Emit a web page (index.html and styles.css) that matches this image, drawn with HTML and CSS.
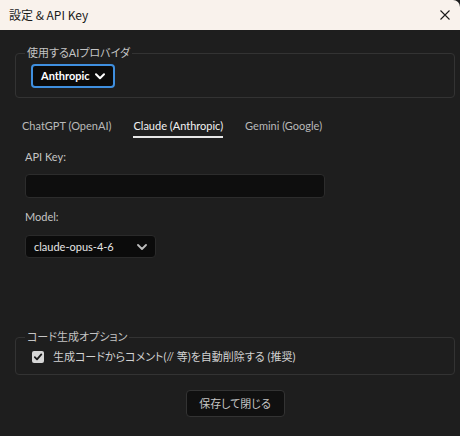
FILE: index.html
```html
<!DOCTYPE html>
<html lang="ja">
<head>
<meta charset="utf-8">
<title>設定 &amp; API Key</title>
<link rel="stylesheet" href="styles.css">
</head>
<body>
<div class="window">
  <div class="titlebar">
    <span class="title">設定 &amp; API Key</span>
    <svg class="close" width="10" height="10" viewBox="0 0 10 10"><path d="M0.5 0.5 L9.5 9.5 M9.5 0.5 L0.5 9.5" stroke="#1a1a1a" stroke-width="1.1" fill="none"/></svg>
  </div>
  <div class="content">
    <fieldset class="group provider">
      <legend>使用するAIプロバイダ</legend>
      <div class="select select-focus">
        <span class="select-text bold">Anthropic</span>
        <svg width="10" height="7" viewBox="0 0 10 7"><path d="M1 1.2 L5 5.2 L9 1.2" stroke="#ffffff" stroke-width="2" fill="none" stroke-linecap="round" stroke-linejoin="round"/></svg>
      </div>
    </fieldset>

    <div class="tabs">
      <span class="tab">ChatGPT (OpenAI)</span>
      <span class="tab active">Claude (Anthropic)</span>
      <span class="tab">Gemini (Google)</span>
    </div>

    <div class="panel">
      <div class="label">API Key:</div>
      <div class="input"></div>
      <div class="label label-model">Model:</div>
      <div class="select select-model">
        <span class="select-text">claude-opus-4-6</span>
        <svg width="10" height="6" viewBox="0 0 10 6"><path d="M1 1 L5 5 L9 1" stroke="#bdbdbd" stroke-width="1.8" fill="none" stroke-linecap="round" stroke-linejoin="round"/></svg>
      </div>
    </div>

    <fieldset class="group options">
      <legend>コード生成オプション</legend>
      <label class="check-row">
        <span class="checkbox"><svg width="10" height="10" viewBox="0 0 10 10"><path d="M1.8 5.2 L4 7.4 L8.3 2.4" stroke="#1a1a1a" stroke-width="1.8" fill="none" stroke-linecap="round" stroke-linejoin="round"/></svg></span>
        <span class="check-text">生成コードからコメント(// 等)を自動削除する (推奨)</span>
      </label>
    </fieldset>

    <div class="actions">
      <button class="btn">保存して閉じる</button>
    </div>
  </div>
</div>
</body>
</html>
```

FILE: styles.css
```css
* { box-sizing: border-box; }
html, body {
  margin: 0;
  padding: 0;
  background: #1e1e1e;
}
body {
  width: 460px;
  height: 436px;
  overflow: hidden;
  font-family: Lato, "Noto Sans CJK JP", sans-serif;
  font-feature-settings: "palt" 1;
  font-size: 11px;
  color: #c8c8c8;
}
.window {
  width: 460px;
  height: 436px;
  background: #1e1e1e;
  display: flex;
  flex-direction: column;
}
.titlebar {
  height: 30px;
  flex: 0 0 30px;
  background: #f9f2ec;
  border-top-right-radius: 7px;
  display: flex;
  align-items: center;
  justify-content: space-between;
  padding: 0 10px 1px 9px;
}
.title {
  color: #1a1a1a;
  font-family: "Noto Sans CJK JP", sans-serif;
  font-feature-settings: normal;
  font-size: 12px;
  line-height: 16px;
}
.close { display: block; }

.content {
  padding: 0 5px 0 15px;
  display: flex;
  flex-direction: column;
}

.group {
  margin: 0;
  border: 1px solid #333333;
  border-radius: 4px;
  padding: 4px 10px 9px 15px;
  min-width: 0;
}
.group legend {
  margin-left: -6px;
  padding: 0 2px;
  font-size: 11px;
  line-height: 14px;
  color: #c4c4c4;
}
.provider { margin-top: 16px; }

.select {
  display: flex;
  align-items: center;
  justify-content: space-between;
  background: #0b0b0b;
  border-radius: 4px;
}
.select-focus {
  width: 84px;
  height: 24px;
  border: 2px solid #3f8fdf;
  padding: 0 8px 0 8px;
}
.select-text {
  font-size: 11px;
  line-height: 16px;
  color: #e6e6e6;
}
.bold { font-weight: 700; color: #ffffff; }

.tabs {
  display: flex;
  gap: 22px;
  margin-top: 20px;
  padding-left: 7px;
}
.tab {
  font-size: 11px;
  line-height: 16px;
  padding-bottom: 2px;
  border-bottom: 2px solid transparent;
  color: #b9b9b9;
}
.tab.active {
  color: #f2f2f2;
  border-bottom-color: #e6e6e6;
}

.panel {
  padding-left: 10px;
  display: flex;
  flex-direction: column;
  align-items: flex-start;
}
.label {
  margin-top: 11px;
  font-size: 11px;
  line-height: 16px;
  color: #c4c4c4;
}
.input {
  margin-top: 9px;
  width: 300px;
  height: 24px;
  background: #0e0e0e;
  border: 1px solid #2c2c2c;
  border-radius: 4px;
}
.label-model { margin-top: 11px; }
.select-model {
  margin-top: 10px;
  width: 131px;
  height: 23px;
  border: 1px solid #2a2a2a;
  padding: 0 8px 0 8px;
}

.options { margin-top: 72px; padding-top: 5px; padding-bottom: 9px; }
.check-row {
  display: flex;
  align-items: center;
  gap: 9px;
  margin-left: 1px;
}
.checkbox {
  width: 12px;
  height: 12px;
  background: #d6d6d6;
  border-radius: 2px;
  display: flex;
  align-items: center;
  justify-content: center;
}
.checkbox svg { display: block; }
.check-text {
  font-size: 11px;
  line-height: 16px;
  color: #d2d2d2;
}

.actions {
  display: flex;
  justify-content: center;
  margin-top: 15px;
}
.btn {
  width: 99px;
  height: 27px;
  background: #101010;
  border: 1px solid #333333;
  border-radius: 4px;
  color: #c6c6c6;
  font-family: inherit;
  font-feature-settings: "palt" 1;
  font-size: 11px;
  line-height: 16px;
  padding: 0;
}
```
